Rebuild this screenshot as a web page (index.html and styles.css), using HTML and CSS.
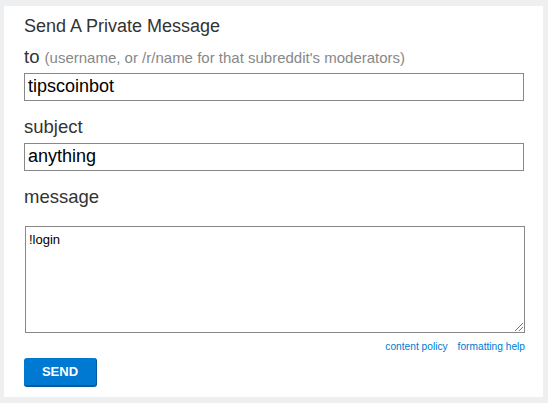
FILE: index.html
```html
<!DOCTYPE html>
<html>
<head>
<meta charset="utf-8">
<link rel="stylesheet" href="styles.css">
</head>
<body>
<div class="panel">
  <h1 class="title">Send A Private Message</h1>
  <div class="label label-to">to <span class="hint">(username, or /r/name for that subreddit's moderators)</span></div>
  <div class="field">tipscoinbot</div>
  <div class="label label-subject">subject</div>
  <div class="field">anything</div>
  <div class="label label-message">message</div>
  <div class="textarea">!login<span class="grip"></span></div>
  <div class="links"><a>content policy</a><a>formatting help</a></div>
  <button class="send">SEND</button>
</div>
</body>
</html>
```
FILE: styles.css
```css
html, body {
  margin: 0;
  padding: 0;
  background: #edeff1;
  font-family: "Liberation Sans", Arial, sans-serif;
}
body {
  padding: 6px 0 0 4px;
  height: 403px;
  box-sizing: border-box;
}
.panel {
  background: #fff;
  width: 539px;
  height: 391px;
  box-sizing: border-box;
  padding: 9px 0 0 20px;
}
.title {
  margin: 0;
  font-size: 18px;
  font-weight: normal;
  line-height: 22px;
  color: #333;
}
.label {
  font-size: 18.5px;
  line-height: 24px;
  height: 24px;
  white-space: nowrap;
  color: #333;
  margin-top: 8px;
}
.label-subject { margin-top: 14px; }
.label-message { margin-top: 14px; }
.hint {
  font-size: 15px;
  line-height: 15px;
  color: #888;
}
.field {
  margin-top: 4px;
  width: 500px;
  height: 28px;
  box-sizing: border-box;
  border: 1px solid #888;
  padding: 0 3px;
  font-size: 18px;
  line-height: 24px;
  color: #000;
}
.textarea {
  position: relative;
  margin: 17px 0 0 1px;
  width: 500px;
  height: 107px;
  box-sizing: border-box;
  border: 1px solid #888;
  padding: 5px 3px;
  font-size: 13px;
  line-height: 16px;
  color: #000;
}
.grip {
  position: absolute;
  right: 1px;
  bottom: 1px;
  width: 8px;
  height: 8px;
  background: linear-gradient(135deg, transparent 45%, #777 45%, #777 52%, transparent 52%, transparent 70%, #777 70%, #777 77%, transparent 77%);
}
.links {
  width: 501px;
  display: flex;
  justify-content: flex-end;
  gap: 10px;
  margin-top: 7px;
  font-size: 10.2px;
  line-height: 13px;
}
.links a {
  color: #0079d3;
}
.send {
  display: block;
  margin-top: 5px;
  width: 73px;
  height: 29px;
  box-sizing: border-box;
  border: 0;
  border-right: 1px solid #005ba1;
  border-bottom: 2px solid #005ba1;
  border-radius: 3px;
  background: #0079d3;
  color: #fff;
  font-family: "Liberation Sans", Arial, sans-serif;
  font-weight: bold;
  font-size: 13px;
  padding: 0;
}
```
